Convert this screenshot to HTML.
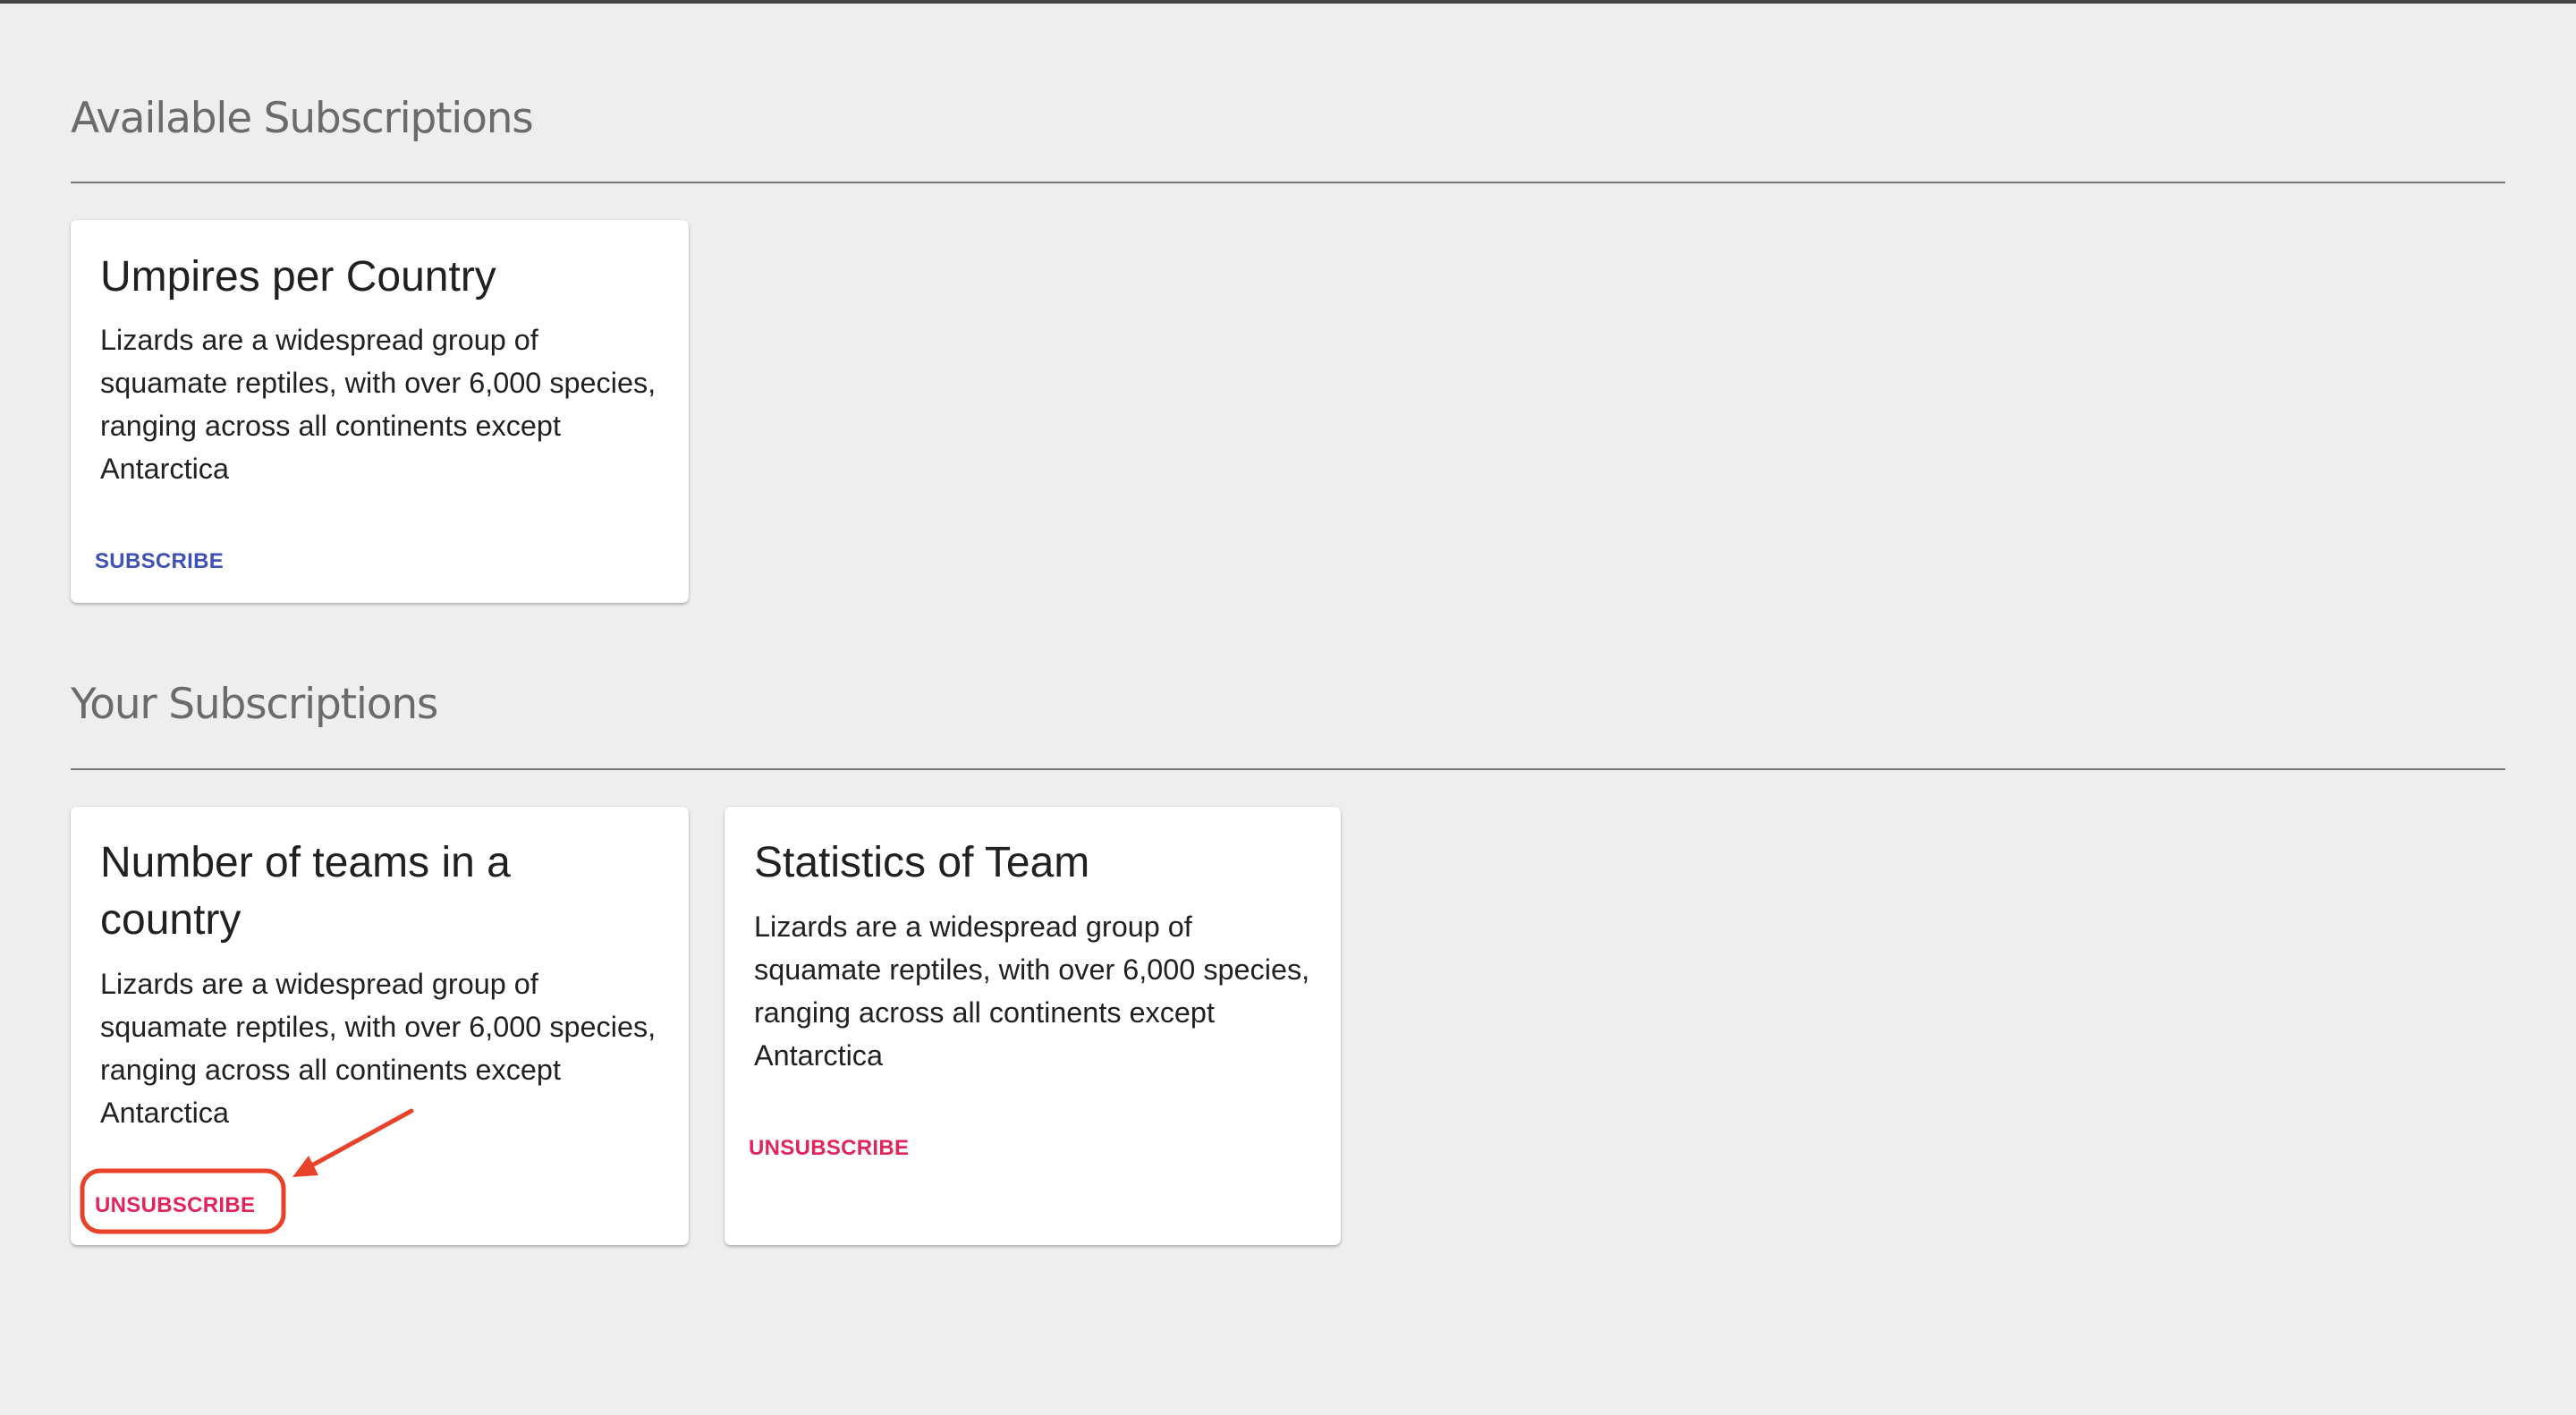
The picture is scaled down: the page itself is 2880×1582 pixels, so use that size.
<!DOCTYPE html>
<html><head><meta charset="utf-8"><style>
html,body{margin:0;padding:0}
body{width:2880px;height:1582px;background:#eeeeee;position:relative;overflow:hidden;font-family:"Liberation Sans",sans-serif}
.topbar{position:absolute;left:0;top:0;width:2880px;height:4px;background:#444}
.h{position:absolute;left:79px;font-family:"DejaVu Sans","Liberation Sans",sans-serif;font-size:47px;color:#6b6b6b;letter-spacing:-1.2px;line-height:60px}
.rule{position:absolute;left:79px;width:2722px;height:2px;background:#777}
.card{position:absolute;background:#fff;border-radius:7px;box-shadow:0 2px 3px rgba(0,0,0,.25),0 0 2px rgba(0,0,0,.08)}
.t{position:absolute;left:33px;font-size:48px;color:#212121;line-height:64px;white-space:nowrap}
.b{position:absolute;left:33px;font-size:32.4px;color:#212121;line-height:48px;white-space:nowrap}
.btn{position:absolute;left:27px;font-size:24px;font-weight:bold;letter-spacing:0.3px;line-height:30px}
.blue{color:#3f51b5}.red{color:#e0255c}
</style></head><body>
<div class="topbar"></div>
<div class="h" style="top:103px">Available Subscriptions</div>
<div class="rule" style="top:203px"></div>
<div class="card" style="left:79px;top:246px;width:691px;height:428px">
 <div class="t" style="top:32px">Umpires per Country</div>
 <div class="b" style="top:110px">Lizards are a widespread group of<br>squamate reptiles, with over 6,000 species,<br>ranging across all continents except<br>Antarctica</div>
 <div class="btn blue" style="top:367px">SUBSCRIBE</div>
</div>
<div class="h" style="top:758px">Your Subscriptions</div>
<div class="rule" style="top:859px"></div>
<div class="card" style="left:79px;top:902px;width:691px;height:490px">
 <div class="t" style="top:31px">Number of teams in a<br>country</div>
 <div class="b" style="top:174px">Lizards are a widespread group of<br>squamate reptiles, with over 6,000 species,<br>ranging across all continents except<br>Antarctica</div>
 <div class="btn red" style="top:431px">UNSUBSCRIBE</div>
</div>
<div class="card" style="left:810px;top:902px;width:689px;height:490px">
 <div class="t" style="top:31px">Statistics of Team</div>
 <div class="b" style="top:110px">Lizards are a widespread group of<br>squamate reptiles, with over 6,000 species,<br>ranging across all continents except<br>Antarctica</div>
 <div class="btn red" style="top:367px">UNSUBSCRIBE</div>
</div>
<svg style="position:absolute;left:0;top:0" width="2880" height="1582">
 <rect x="92" y="1309" width="225" height="68" rx="20" fill="none" stroke="#e8432a" stroke-width="5"/>
 <line x1="460" y1="1242" x2="345" y2="1305" stroke="#e8432a" stroke-width="5" stroke-linecap="round"/>
 <polygon points="327,1316 345,1292 356,1314" fill="#e8432a"/>
</svg>
</body></html>
